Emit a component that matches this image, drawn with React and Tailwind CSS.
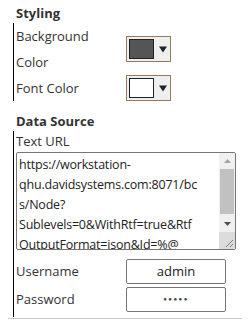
import { useState } from "react";

const font = { fontFamily: '"Open Sans", "Noto Sans", sans-serif' };

function ColorPicker({ color }) {
  return (
    <div className="w-[45px] h-[26px] border border-[#957a5c] bg-[#efefef] flex items-center pl-[2px]">
      <div className="w-[25px] h-[20px] border border-[#222]" style={{ backgroundColor: color }} />
      <svg className="ml-[5px]" width="8" height="7" viewBox="0 0 8 7">
        <path d="M0 0.5 L8 0.5 L4 6.5 Z" fill="#222" />
      </svg>
    </div>
  );
}

function FakeTextarea({ lines }) {
  return (
    <div className="relative w-[220px] h-[98px] border border-[#767676] rounded-[2px] overflow-hidden bg-white">
      <div className="pl-[2px] pt-[2px] pr-[17px] text-[12.5px] tracking-[-0.2px] leading-[20px] text-[#222]">
        {lines.map((l) => (
          <div key={l} className="whitespace-nowrap">{l}</div>
        ))}
      </div>
      {/* scrollbar */}
      <div className="absolute right-0 top-0 bottom-0 w-[16px] bg-[#f0f0f0] flex flex-col">
        <div className="h-[16px] flex items-center justify-center">
          <svg width="7" height="4" viewBox="0 0 7 4"><path d="M0 4 L3.5 0 L7 4 Z" fill="#a3a3a3" /></svg>
        </div>
        <div className="mx-[1px] h-[45px] bg-[#c1c1c1]" />
        <div className="flex-1 min-h-0" />
        <div className="h-[17px] flex items-center justify-center">
          <svg width="7" height="4" viewBox="0 0 7 4"><path d="M0 0 L7 0 L3.5 4 Z" fill="#505050" /></svg>
        </div>
        <div className="h-[17px] bg-[#dcdcdc] relative">
          <svg className="absolute right-[2px] bottom-[2px]" width="8" height="8" viewBox="0 0 8 8">
            <path d="M8 1 L1 8 M8 5 L5 8" stroke="#808080" strokeWidth="1" />
          </svg>
        </div>
      </div>
    </div>
  );
}

function TextInput({ value, dots }) {
  return (
    <div className="w-[100px] h-[25px] border border-[#767676] rounded-[2px] flex items-center justify-center text-[13px] text-[#222]">
      {dots ? <span className="text-[6px] tracking-[1.5px] text-[#444]">●●●●●</span> : value}
    </div>
  );
}

export default function App() {
  const [bg] = useState("#555555");
  return (
    <div className="w-[250px] h-[323px] bg-white text-[#333] text-[13px]" style={font}>
      <div className="mx-2 border-b border-[#cccccc] pb-[1px]">
        {/* Styling */}
        <div className="pl-2 pt-[3px] h-[23px] font-bold leading-[20px]">Styling</div>
        <div className="ml-[5px] border-l border-black pl-[2px]">
          <div className="grid grid-cols-[110px_auto] items-center">
            <div className="leading-[26px] h-[52px] w-[80px]">Background Color</div>
            <ColorPicker color={bg} />
            <div className="leading-[26px] h-[26px]">Font Color</div>
            <ColorPicker color="#ffffff" />
          </div>
        </div>

        {/* Data Source */}
        <div className="pl-2 pt-[10px] h-[30px] font-bold leading-[20px]">Data Source</div>
        <div className="ml-[5px] border-l border-black pl-[2px] pb-[5px]">
          <div className="h-[21px] leading-[20px]">Text URL</div>
          <FakeTextarea
            lines={[
              "https://workstation-",
              "qhu.davidsystems.com:8071/bc",
              "s/Node?",
              "Sublevels=0&WithRtf=true&Rtf",
              "OutputFormat=json&Id=%@",
            ]}
          />
          <div className="mt-[9px] grid grid-cols-[110px_auto] gap-y-[3px] items-center">
            <div>Username</div>
            <TextInput value="admin" />
            <div>Password</div>
            <TextInput dots />
          </div>
        </div>
      </div>
    </div>
  );
}
